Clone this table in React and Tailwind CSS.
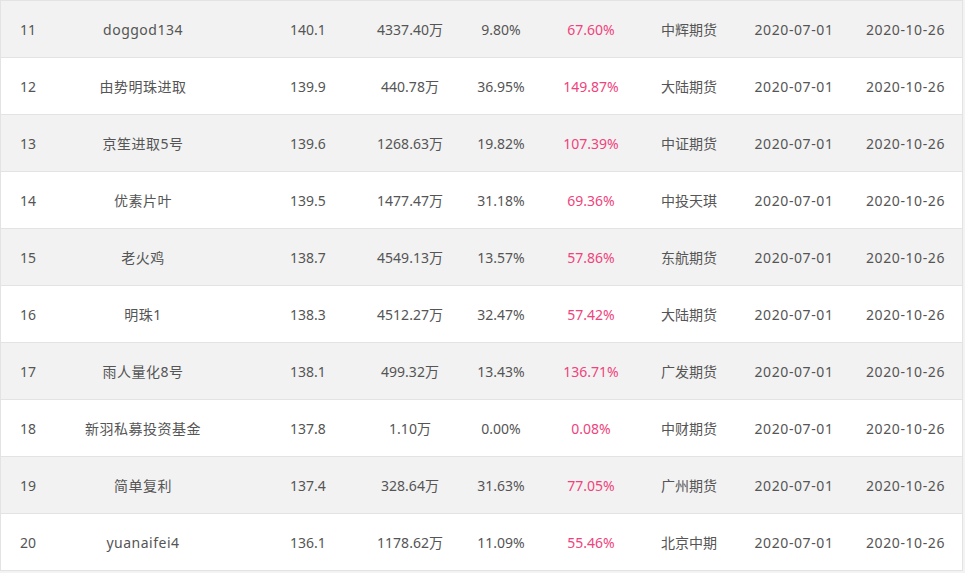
import React from 'react';

const rows = [
  ['11', 'doggod134', '140.1', '4337.40万', '9.80%', '67.60%', '中辉期货', '2020-07-01', '2020-10-26'],
  ['12', '由势明珠进取', '139.9', '440.78万', '36.95%', '149.87%', '大陆期货', '2020-07-01', '2020-10-26'],
  ['13', '京笙进取5号', '139.6', '1268.63万', '19.82%', '107.39%', '中证期货', '2020-07-01', '2020-10-26'],
  ['14', '优素片叶', '139.5', '1477.47万', '31.18%', '69.36%', '中投天琪', '2020-07-01', '2020-10-26'],
  ['15', '老火鸡', '138.7', '4549.13万', '13.57%', '57.86%', '东航期货', '2020-07-01', '2020-10-26'],
  ['16', '明珠1', '138.3', '4512.27万', '32.47%', '57.42%', '大陆期货', '2020-07-01', '2020-10-26'],
  ['17', '雨人量化8号', '138.1', '499.32万', '13.43%', '136.71%', '广发期货', '2020-07-01', '2020-10-26'],
  ['18', '新羽私募投资基金', '137.8', '1.10万', '0.00%', '0.08%', '中财期货', '2020-07-01', '2020-10-26'],
  ['19', '简单复利', '137.4', '328.64万', '31.63%', '77.05%', '广州期货', '2020-07-01', '2020-10-26'],
  ['20', 'yuanaifei4', '136.1', '1178.62万', '11.09%', '55.46%', '北京中期', '2020-07-01', '2020-10-26'],
];

const App = () => {
  return (
    <div
      className="min-h-screen bg-[#f3f3f3]"
      style={{ fontFamily: '"Noto Sans", "Noto Sans CJK SC", sans-serif' }}
    >
      <div className="w-[963px] border-x border-t border-[#e3e3e3] text-[14px] text-[#555]">
        {rows.map((r, i) => (
          <div
            key={r[0]}
            className={`grid grid-cols-[30px_224px_106px_98px_84px_96px_100px_110px_113px] h-[57px] border-b border-[#e3e3e3] items-center ${
              i % 2 === 0 ? 'bg-[#f2f2f2]' : 'bg-white'
            }`}
          >
            <div className="pl-[19px] whitespace-nowrap">{r[0]}</div>
            {r.slice(1).map((c, j) => (
              <div
                key={j}
                className={`flex justify-center whitespace-nowrap ${j === 0 ? 'tracking-[0.5px]' : ''} ${
                  j >= 6 ? 'tracking-[0.6px]' : ''
                } ${j === 4 ? 'text-[#f0437c]' : ''}`}
              >
                {c}
              </div>
            ))}
          </div>
        ))}
      </div>
    </div>
  );
};

export default App;
